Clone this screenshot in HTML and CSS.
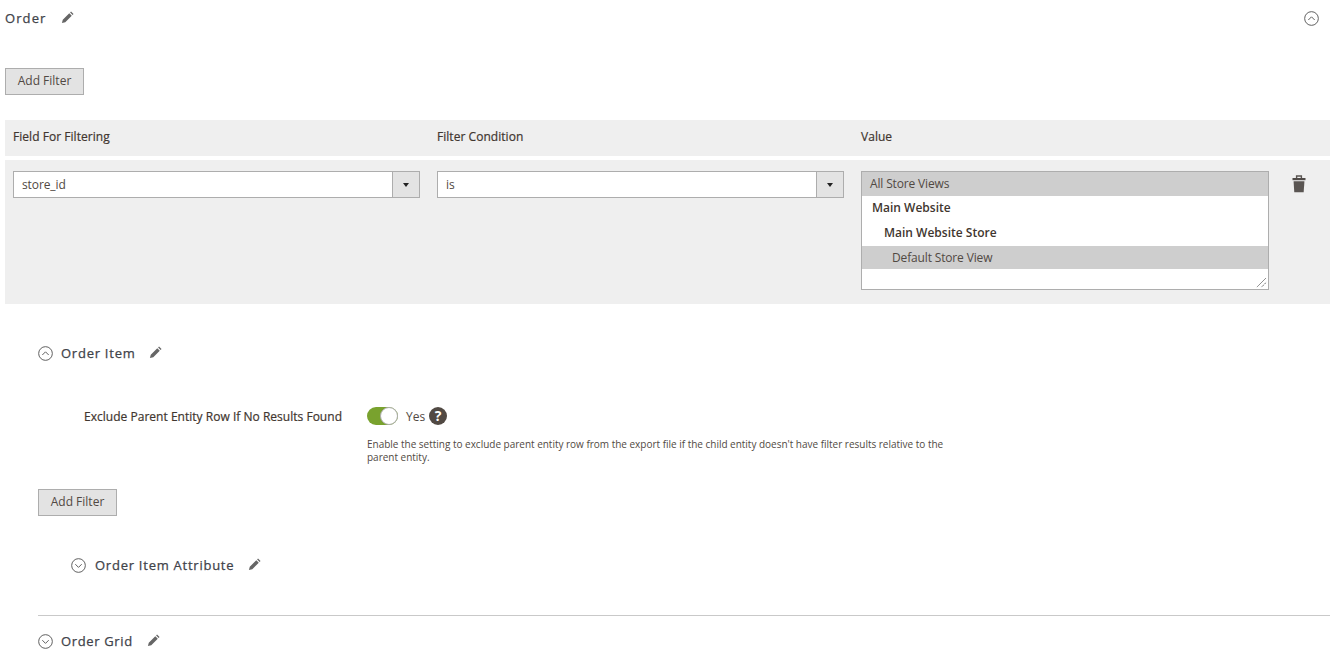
FILE: index.html
```html
<!DOCTYPE html>
<html lang="en">
<head>
<meta charset="utf-8">
<title>Order</title>
<link rel="stylesheet" href="styles.css">
</head>
<body>
<svg class="defs" width="0" height="0" aria-hidden="true">
  <symbol id="pencil" viewBox="0 0 14 14"><path d="M1 13l.9-3.6 7-7 2.7 2.7-7 7zM9.800 1.500l1-1 2.700 2.700-1 1z" fill="#666"/></symbol>
  <symbol id="up" viewBox="0 0 16 16"><circle cx="8" cy="8" r="7.300" fill="none" stroke="#555" stroke-width="1"/><path d="M4.600 9.600L8 6.200l3.400 3.400" fill="none" stroke="#555" stroke-width="1"/></symbol>
  <symbol id="down" viewBox="0 0 16 16"><circle cx="8" cy="8" r="7.300" fill="none" stroke="#555" stroke-width="1"/><path d="M4.600 6.600L8 10l3.400-3.400" fill="none" stroke="#555" stroke-width="1"/></symbol>
</svg>
<main class="page">
  <header class="top-head">
    <div class="title-line">
      <h2 class="title title-main">Order</h2>
      <svg class="pencil"><use href="#pencil"/></svg>
    </div>
    <svg class="toggle-icon"><use href="#up"/></svg>
  </header>

  <button class="btn btn-top">Add Filter</button>

  <div class="filter-head">
    <span>Field For Filtering</span>
    <span>Filter Condition</span>
    <span>Value</span>
  </div>

  <div class="filter-row">
    <div class="select"><span class="select-text">store_id</span><span class="select-arrow"></span></div>
    <div class="select"><span class="select-text">is</span><span class="select-arrow"></span></div>
    <div class="listbox">
      <div class="opt opt-all sel">All Store Views</div>
      <div class="opt opt-site">Main Website</div>
      <div class="opt opt-store">Main Website Store</div>
      <div class="opt opt-view sel">Default Store View</div>
      <svg class="grip" viewBox="0 0 12 12"><path d="M1 11L11 1M6 11l5-5" stroke="#444" stroke-width="1" stroke-dasharray="1 .6" fill="none"/></svg>
    </div>
    <svg class="trash" viewBox="0 0 14 18"><path d="M4.600 3V1h4.800v2" fill="none" stroke="#5a5552" stroke-width="1.400"/><path d="M0.500 3h13v2.200H.5z" fill="#4f4a47"/><path d="M1.600 6.200h10.800l-.7 11H2.300z" fill="#5a5552"/></svg>
  </div>

  <section class="sub">
    <div class="sub-head">
      <svg class="chev"><use href="#up"/></svg>
      <h3 class="title">Order Item</h3>
      <svg class="pencil"><use href="#pencil"/></svg>
    </div>

    <div class="field">
      <label class="field-label">Exclude Parent Entity Row If No Results Found</label>
      <div class="field-control">
        <div class="switch-line">
          <span class="switch"><span class="knob"></span></span>
          <span class="yes">Yes</span>
          <span class="help">?</span>
        </div>
        <p class="note">Enable the setting to exclude parent entity row from the export file if the child entity doesn't have filter results relative to the parent entity.</p>
      </div>
    </div>

    <button class="btn btn-sub">Add Filter</button>

    <div class="sub-head nested">
      <svg class="chev chev-nested"><use href="#down"/></svg>
      <h3 class="title">Order Item Attribute</h3>
      <svg class="pencil"><use href="#pencil"/></svg>
    </div>

    <hr class="rule">

    <div class="sub-head last">
      <svg class="chev"><use href="#down"/></svg>
      <h3 class="title title-grid">Order Grid</h3>
      <svg class="pencil"><use href="#pencil"/></svg>
    </div>
  </section>
</main>
</body>
</html>
```

FILE: styles.css
```css
* { box-sizing: border-box; }
html, body { margin: 0; padding: 0; background: #fff; }
body { font-family: "Open Sans", "Liberation Sans", sans-serif; color: #41362f; font-size: 12px; height: 664px; overflow: hidden; }
.defs { display: block; height: 0; }
.page { padding: 0 5px; width: 1335px; }

.top-head { display: flex; justify-content: space-between; align-items: center; height: 36px; }
.title-line { display: flex; align-items: center; }
.title { margin: 0; font-size: 13px; font-weight: 400; letter-spacing: .75px; color: #41434a; line-height: 18px; -webkit-text-stroke: .25px #41434a; }
.title-main { margin-top: -1px; letter-spacing: 1.1px; }
.title-grid { letter-spacing: .65px; }
.pencil { width: 13px; height: 13px; margin-left: 14px; margin-top: -1px; }
.toggle-icon { width: 15px; height: 15px; margin-right: 11px; }

.btn { display: block; width: 79px; height: 27px; padding: 0 0 2px; background: #e3e3e3; border: 1px solid #adadad; color: #514943; font-family: inherit; font-size: 12px; line-height: 23px; text-align: center; }
.btn-top { margin-top: 32px; }

.filter-head { display: grid; grid-template-columns: 407px 407px 408px; column-gap: 17px; align-items: center; height: 36px; margin-top: 25px; padding: 0 0 4px 8px; background: #efefef; color: #41362f; letter-spacing: .04px; -webkit-text-stroke: .2px #41362f; }
.filter-row { display: flex; align-items: flex-start; height: 144px; margin-top: 4px; padding: 11px 0 0 8px; background: #efefef; }

.select { display: flex; width: 407px; height: 27px; margin-right: 17px; background: #fff; border: 1px solid #adadad; }
.select-text { flex: 1; padding-left: 8px; line-height: 25px; color: #514943; letter-spacing: -.1px; }
.select-arrow { position: relative; width: 27px; background: #e3e3e3; border-left: 1px solid #adadad; }
.select-arrow::after { content: ""; position: absolute; left: 10px; top: 11px; border: 3px solid transparent; border-top: 4px solid #222; border-bottom: 0; }

.listbox { position: relative; width: 408px; height: 119px; background: #fff; border: 1px solid #adadad; color: #514943; }
.opt { line-height: 18px; }
.opt-all { height: 24px; padding: 3px 0 0 8px; letter-spacing: -.15px; }
.opt-site { height: 25px; padding: 3px 0 0 10px; font-weight: 600; color: #41362f; }
.opt-store { height: 25px; padding: 3px 0 0 22px; font-weight: 600; color: #41362f; }
.opt-view { height: 23px; padding: 3px 0 0 30px; letter-spacing: -.15px; }
.sel { background: #cecece; }
.grip { position: absolute; right: 1px; bottom: 1px; width: 11px; height: 11px; }
.trash { width: 14px; height: 18px; margin: 4px 0 0 23px; }

.sub { padding-left: 33px; }
.sub-head { display: flex; align-items: center; height: 18px; margin-top: 40px; }
.chev { width: 15px; height: 15px; margin-right: 8px; }
.chev-nested { margin-right: 9px; }
.sub .pencil { margin-left: 14px; }

.field { display: flex; margin-top: 45px; }
.field-label { width: 304px; padding-top: 1px; line-height: 18px; text-align: right; color: #41362f; letter-spacing: .02px; -webkit-text-stroke: .2px #41362f; }
.field-control { margin-left: 25px; width: 590px; }
.switch-line { display: flex; align-items: center; height: 18px; }
.switch { display: block; position: relative; width: 31px; height: 18px; border-radius: 9px; background: #79a22e; }
.knob { position: absolute; right: 0; top: 0; width: 18px; height: 18px; border-radius: 50%; background: #fff; border: 1px solid #adadad; }
.yes { margin-left: 8px; color: #514943; }
.help { display: block; width: 18px; height: 18px; margin-left: 4px; border-radius: 50%; background: #514943; color: #fff; font-size: 14px; font-weight: 700; line-height: 18px; text-align: center; }
.note { margin: 13px 0 0; font-size: 10px; line-height: 13px; color: #514943; letter-spacing: -.015px; }

.btn-sub { margin-top: 25px; }
.nested { margin-top: 40px; padding-left: 33px; }
.rule { margin: 41px 0 0; border: 0; border-top: 1px solid #c9c9c9; }
.last { margin-top: 16px; }
```
